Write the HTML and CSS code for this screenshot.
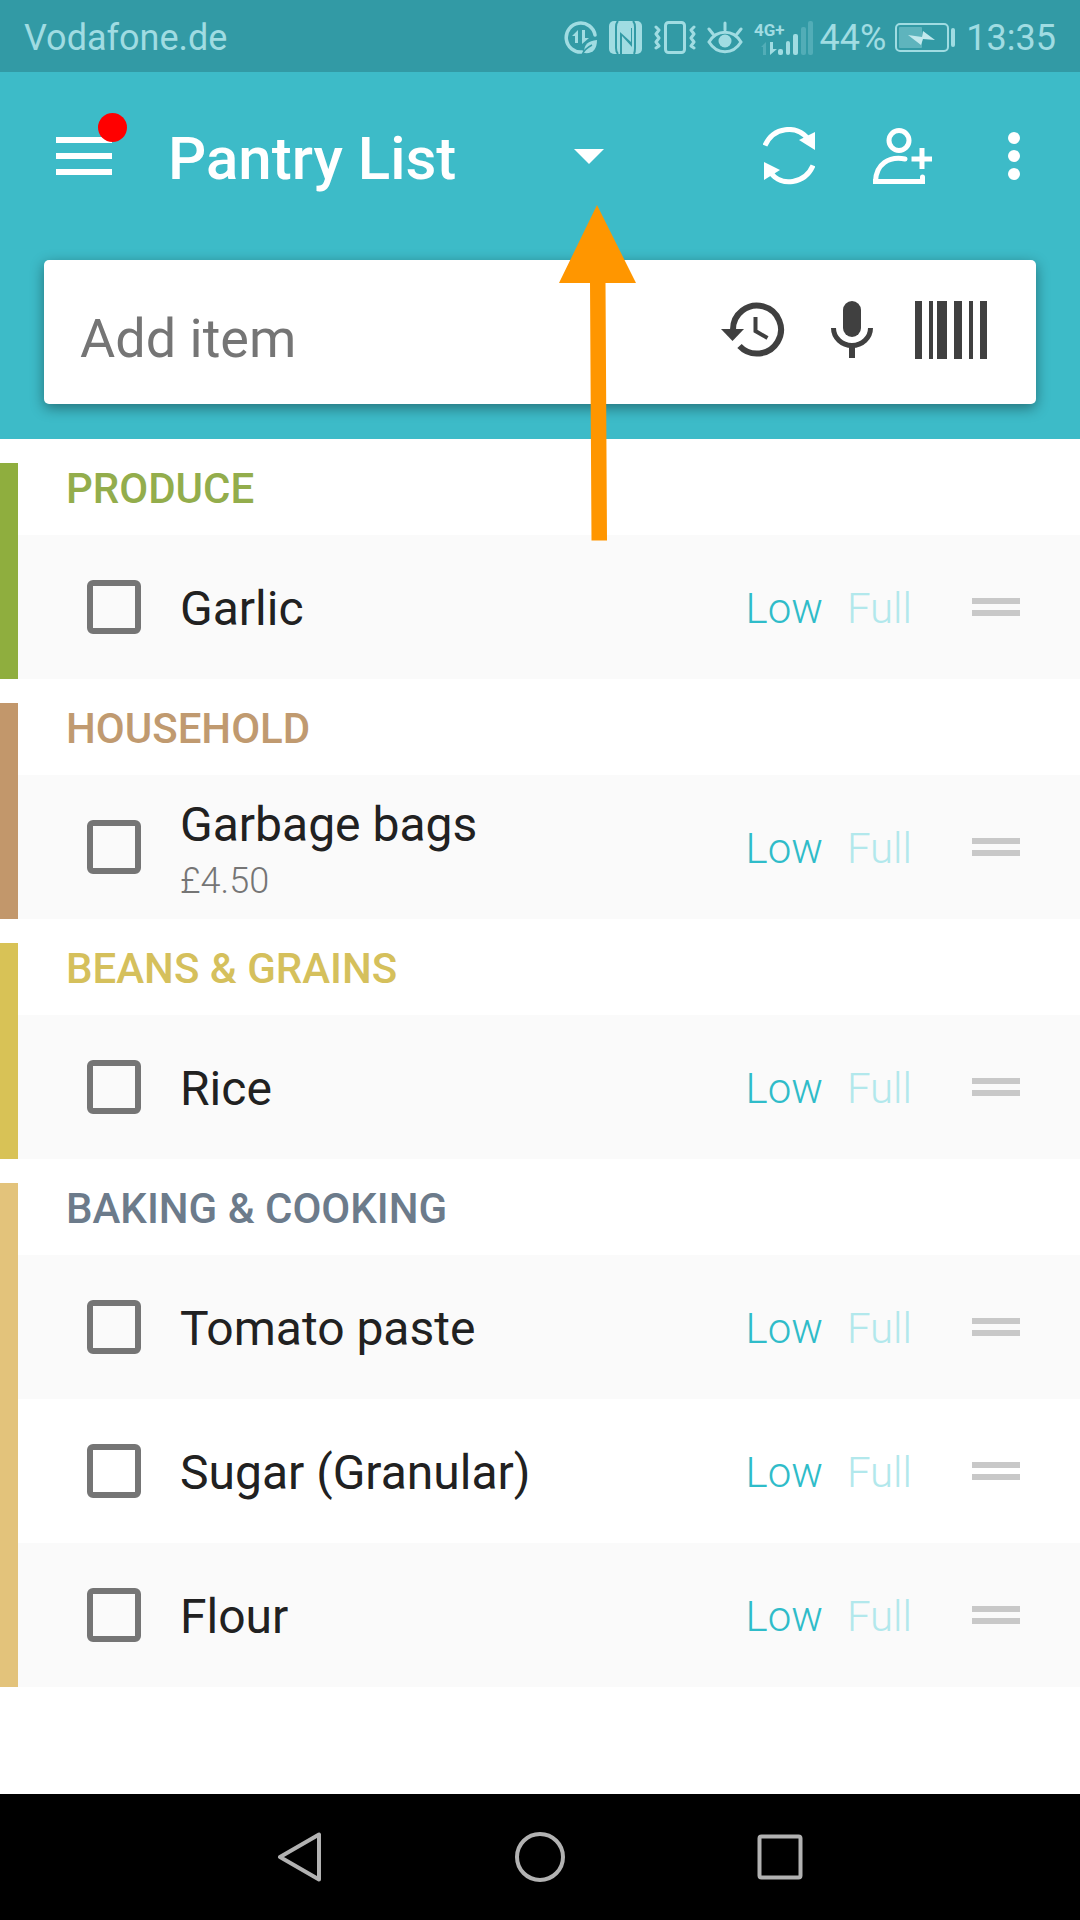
FILE: index.html
```html
<!DOCTYPE html>
<html lang="en">

<head>
    <meta charset="UTF-8">
    <meta name="viewport" content="width=device-width, initial-scale=1.0">
    <title>Pantry List</title>
    <link rel="stylesheet" href="styles.css">
</head>

<body>
    <div class="status-bar">
        <span class="carrier">Vodafone.de</span>
        <div class="status-icons">
            <!-- data saver -->
            <svg width="34" height="34" viewBox="0 0 34 34">
                <path d="M31 14A14.5 14.5 0 1 0 18 31" fill="none" stroke="currentColor" stroke-width="3.5" stroke-linecap="round"/>
                <path d="M8 15l6-6v13h-3v-7zM18 9h3v8h4l-7 6z" fill="currentColor"/>
                <path d="M33 19c0 9-4 14-13 13 0-9 4-12 13-13z" fill="currentColor"/>
                <path d="M18 34c2-5 6-8 10-10" fill="none" stroke="#329aa5" stroke-width="1.5"/>
            </svg>
            <!-- nfc -->
            <svg width="34" height="34" viewBox="0 0 34 34">
                <rect width="33" height="33" rx="5" fill="currentColor"/>
                <path d="M9 0Q7 2 7 6v21q0 4 2 6M24 0q2 2 2 6v21q0 4-1 6" fill="none" stroke="#329aa5" stroke-width="2"/>
                <path d="M11 11l11 10V7h1v19L13 15v18h-2z" fill="#329aa5"/>
            </svg>
            <!-- vibrate -->
            <svg width="42" height="34" viewBox="0 0 42 34" fill="none" stroke="currentColor" stroke-width="3" stroke-linecap="round" stroke-linejoin="round">
                <rect x="11.500" y="1.500" width="19" height="30" rx="3"/>
                <path d="M2 6l3 3-3 4 3 4-3 4 3 4-3 2M40 6l-3 3 3 4-3 4 3 4-3 4 3 2"/>
            </svg>
            <!-- eye comfort -->
            <svg width="36" height="34" viewBox="0 0 36 34">
                <path d="M2 21C10 8 26 8 34 21 26 34 10 34 2 21zM2 8l4 5M18 2v7M34 8l-4 5" fill="none" stroke="currentColor" stroke-width="3" stroke-linecap="round"/>
                <circle cx="18" cy="20" r="6.500" fill="currentColor"/>
            </svg>
            <!-- signal -->
            <svg class="signal" width="60" height="36" viewBox="0 0 60 36">
                <text x="0" y="16">4G+</text>
                <g fill="currentColor">
                    <path d="M7 27l5-5v13H9v-8z" opacity=".3"/>
                    <path d="M16 22h3v7h4l-7 6z"/>
                    <rect x="24" y="29" width="5" height="6" rx="2"/>
                    <rect x="32" y="21" width="4" height="14" rx="2"/>
                    <rect x="39" y="14" width="5" height="21" rx="2"/>
                    <rect x="47" y="7" width="5" height="28" rx="2" opacity=".3"/>
                    <rect x="54" y="1" width="5" height="34" rx="2" opacity=".3"/>
                </g>
            </svg>
        </div>
        <span class="percent">44%</span>
        <!-- battery -->
        <svg class="battery" width="62" height="30" viewBox="0 0 62 30">
            <rect x="1" y="1" width="52" height="27" rx="4" fill="none" stroke="currentColor" stroke-width="2"/>
            <rect x="4" y="4" width="23" height="21" rx="1" fill="currentColor" opacity=".4"/>
            <path d="M13 12l14 2 1-6 12 9-12-1-2 6z" fill="#c3e9ed"/>
            <rect x="56" y="5" width="4" height="19" rx="2" fill="currentColor"/>
        </svg>
        <span class="clock">13:35</span>
    </div>

    <header class="header">
        <div class="app-bar">
            <button class="icon-btn menu" aria-label="Menu">
                <svg width="56" height="38" viewBox="0 0 56 38" fill="#fff">
                    <path d="M0 0h56v6H0zM0 16h56v6H0zM0 32h56v6H0z"/>
                </svg>
                <span class="badge"></span>
            </button>
            <div class="list-picker">
                <select aria-label="List">
                    <option>Pantry List</option>
                </select>
                <svg width="30" height="15" viewBox="0 0 30 15" fill="#fff"><path d="M0 0h30L15 15z"/></svg>
            </div>
            <div class="actions">
                <button class="icon-btn" aria-label="Sync">
                    <svg width="52" height="58" viewBox="0 0 52 58">
                        <path d="M2 18.500C10 0 34-3 45 12M50 38.500C42 57 18 60 8 46" fill="none" stroke="#fff" stroke-width="5"/>
                        <path d="M52 5v18L36 13zM1 35v18L17 43z" fill="#fff"/>
                    </svg>
                </button>
                <button class="icon-btn" aria-label="Share list">
                    <svg width="60" height="56" viewBox="0 0 60 56" fill="none" stroke="#fff" stroke-width="5">
                        <circle cx="26" cy="12.500" r="10"/>
                        <path d="M32 31C16 28 3 36 2.500 53.500h47V49" stroke-linecap="round"/>
                        <path d="M0 53.500h52M49 20v21M38.500 31H59"/>
                    </svg>
                </button>
                <button class="icon-btn more" aria-label="More">
                    <svg width="12" height="48" viewBox="0 0 12 48" fill="#fff">
                        <circle cx="6" cy="6" r="6"/><circle cx="6" cy="24" r="6"/><circle cx="6" cy="42" r="6"/>
                    </svg>
                </button>
            </div>
        </div>

        <div class="add-card">
            <input type="text" placeholder="Add item" aria-label="Add item">
            <button class="icon-btn" aria-label="History">
                <svg width="64" height="56" viewBox="0 0 64 56">
                    <path d="M12 28A24 24 0 1 1 18.500 44" fill="none" stroke="#404040" stroke-width="6"/>
                    <path d="M0 27h23L11.500 39z" fill="#404040"/>
                    <path d="M34.500 15v14l12 7" fill="none" stroke="#404040" stroke-width="4"/>
                </svg>
            </button>
            <button class="icon-btn mic" aria-label="Voice input">
                <svg width="42" height="58" viewBox="0 0 42 58">
                    <rect x="12" y="0" width="18" height="36" rx="9" fill="#404040"/>
                    <path d="M2.500 27a18.500 17.500 0 0 0 37 0" fill="none" stroke="#404040" stroke-width="5"/>
                    <path d="M18 45h6v12h-6z" fill="#404040"/>
                </svg>
            </button>
            <button class="icon-btn" aria-label="Scan barcode">
                <svg width="72" height="58" viewBox="0 0 72 58" fill="#404040">
                    <path d="M0 0h7v58H0zM14 0h4v58h-4zM22 0h10v58H22zM39 0h8v58h-8zM54 0h4v58h-4zM65 0h7v58h-7z"/>
                </svg>
            </button>
        </div>
    </header>

    <main class="list">
        <section class="category produce">
            <h2>PRODUCE</h2>
            <div class="item">
                <input type="checkbox" id="garlic">
                <label for="garlic">Garlic</label>
                <button class="level low">Low</button>
                <button class="level full">Full</button>
                <span class="handle"></span>
            </div>
        </section>

        <section class="category household">
            <h2>HOUSEHOLD</h2>
            <div class="item">
                <input type="checkbox" id="bags">
                <label for="bags">Garbage bags<small>£4.50</small></label>
                <button class="level low">Low</button>
                <button class="level full">Full</button>
                <span class="handle"></span>
            </div>
        </section>

        <section class="category beans">
            <h2>BEANS &amp; GRAINS</h2>
            <div class="item">
                <input type="checkbox" id="rice">
                <label for="rice">Rice</label>
                <button class="level low">Low</button>
                <button class="level full">Full</button>
                <span class="handle"></span>
            </div>
        </section>

        <section class="category baking">
            <h2>BAKING &amp; COOKING</h2>
            <div class="item">
                <input type="checkbox" id="tomato">
                <label for="tomato">Tomato paste</label>
                <button class="level low">Low</button>
                <button class="level full">Full</button>
                <span class="handle"></span>
            </div>
            <div class="item">
                <input type="checkbox" id="sugar">
                <label for="sugar">Sugar (Granular)</label>
                <button class="level low">Low</button>
                <button class="level full">Full</button>
                <span class="handle"></span>
            </div>
            <div class="item">
                <input type="checkbox" id="flour">
                <label for="flour">Flour</label>
                <button class="level low">Low</button>
                <button class="level full">Full</button>
                <span class="handle"></span>
            </div>
        </section>
    </main>

    <nav class="nav-bar">
        <button class="icon-btn" aria-label="Back">
            <svg width="50" height="50" viewBox="0 0 50 50" fill="none" stroke="#b2b2b2" stroke-width="4" stroke-linejoin="round">
                <path d="M44 2.500v45L5 25z"/>
            </svg>
        </button>
        <button class="icon-btn" aria-label="Home">
            <svg width="50" height="50" viewBox="0 0 50 50" fill="none" stroke="#b2b2b2" stroke-width="4">
                <circle cx="25" cy="25" r="23"/>
            </svg>
        </button>
        <button class="icon-btn" aria-label="Recent apps">
            <svg width="50" height="50" viewBox="0 0 50 50" fill="none" stroke="#b2b2b2" stroke-width="4">
                <rect x="4.500" y="4.500" width="41" height="41" rx="2"/>
            </svg>
        </button>
    </nav>

    <!-- arrow pointing at the list picker -->
    <svg class="pointer" width="78" height="336" viewBox="0 0 78 336" fill="#ff9600">
        <path d="M38 0l39 78H46.500L48 335.500H32.500L31 78H0z"/>
    </svg>
</body>

</html>
```

FILE: styles.css
```css
:root {
    --teal: #3dbbc8;
    --teal-dark: #329aa5;
    --status: #a0dce2;
}

* {
    box-sizing: border-box;
}

body {
    position: relative;
    display: flex;
    flex-direction: column;
    min-height: 100vh;
    margin: 0;
    background: #fff;
    color: #212121;
    font-family: Roboto, "Liberation Sans", sans-serif;
}

button,
input,
select {
    font-family: inherit;
}

svg {
    display: block;
    flex: none;
}

.icon-btn {
    flex: none;
    padding: 0;
    border: 0;
    background: none;
}

/* status bar */
.status-bar {
    display: flex;
    align-items: center;
    height: 72px;
    padding: 3px 24px 0;
    background: var(--teal-dark);
    color: var(--status);
    font-size: 36px;
}

.status-icons {
    display: flex;
    align-items: center;
    gap: 11px;
    margin-left: auto;
}

.signal {
    overflow: visible;
}

.signal text {
    fill: currentColor;
    font-size: 17px;
    font-weight: 700;
}

.percent {
    margin: 0 9px 0 6px;
}

.battery {
    margin-right: 9px;
}

/* header */
.header {
    padding-bottom: 35px;
    background: var(--teal);
}

.app-bar {
    display: flex;
    align-items: center;
    height: 168px;
    padding: 0 60px 0 56px;
}

.menu {
    position: relative;
}

.badge {
    position: absolute;
    top: -24px;
    right: -15px;
    width: 29px;
    height: 29px;
    border-radius: 50%;
    background: #f00;
}

.list-picker {
    display: grid;
    flex: 0 1 436px;
    align-items: center;
    margin-left: 56px;
}

.list-picker select,
.list-picker svg {
    grid-area: 1 / 1;
}

.list-picker select {
    height: 80px;
    padding: 4px 0 0;
    border: 0;
    appearance: none;
    background: none;
    color: #fff;
    font-size: 60px;
    font-weight: 500;
}

.list-picker svg {
    justify-self: end;
    pointer-events: none;
}

.actions {
    display: flex;
    align-items: center;
    gap: 58px;
    margin-left: auto;
}

.more {
    margin-left: 17px;
}

.add-card {
    display: flex;
    align-items: center;
    height: 144px;
    margin: 20px 44px 0;
    padding: 0 49px 5px 36px;
    border-radius: 5px;
    background: #fff;
    box-shadow: 0 4px 14px rgba(0, 0, 0, 0.4);
}

.add-card input {
    flex: 1;
    min-width: 0;
    height: 100px;
    padding: 18px 0 0;
    border: 0;
    outline: 0;
    background: none;
    font-size: 54px;
}

.add-card input::placeholder {
    color: #757575;
    opacity: 1;
}

.mic {
    margin: 0 42px 0 46px;
}

/* list */
.list {
    flex: 1;
}

.category {
    margin-top: 24px;
    border-left: 18px solid;
}

.category h2 {
    margin: 0;
    padding: 0 48px 20px;
    font-size: 42px;
    font-weight: 500;
    line-height: 52px;
}

.produce {
    border-color: #8fae3e;
}

.produce h2 {
    color: #93ad4c;
}

.household {
    border-color: #c2976b;
}

.household h2 {
    color: #c09a70;
}

.beans {
    border-color: #d8c256;
}

.beans h2 {
    color: #d5c05c;
}

.baking {
    border-color: #e3c37b;
}

.baking h2 {
    color: #6c7b8b;
}

.item {
    display: flex;
    align-items: center;
    height: 144px;
    padding: 0 60px 0 69px;
}

.item:nth-child(even) {
    background: #fafafa;
}

.item input {
    flex: none;
    width: 54px;
    height: 54px;
    margin: 0 39px 0 0;
    border: 6px solid #757575;
    border-radius: 6px;
    appearance: none;
}

.item label {
    flex: 1;
    padding-top: 4px;
    font-size: 48px;
    line-height: 64px;
}

.item small {
    display: block;
    color: #757575;
    font-size: 36px;
    font-weight: 300;
    line-height: 48px;
}

.level {
    padding: 2px 0 0;
    border: 0;
    background: none;
    font-size: 42px;
    font-weight: 300;
}

.low {
    color: #2fbcc9;
}

.full {
    margin: 0 60px 0 24px;
    color: #b2e8ec;
}

.handle {
    width: 48px;
    height: 18px;
    border: solid #c8c8c8;
    border-width: 6px 0;
}

/* system navigation */
.nav-bar {
    display: grid;
    grid-template-columns: repeat(3, 1fr);
    align-items: center;
    justify-items: center;
    height: 126px;
    padding: 0 180px;
    background: #000;
}

.pointer {
    position: absolute;
    top: 205px;
    left: 559px;
    pointer-events: none;
}
```
